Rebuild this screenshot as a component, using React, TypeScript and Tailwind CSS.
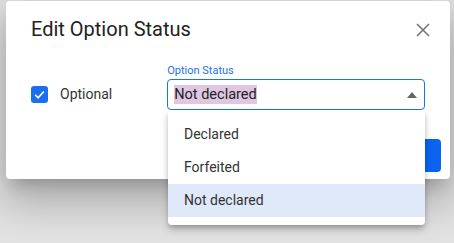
import React from 'react';

const font = { fontFamily: 'Roboto, "Liberation Sans", sans-serif' };

const App: React.FC = () => {
  const options = ['Declared', 'Forfeited', 'Not declared'];
  const selected = 'Not declared';

  return (
    <div className="h-[243px] w-[454px] overflow-hidden bg-[#e2e2e2] pt-[1px] pl-[6px]" style={font}>
      <div className="relative h-[178px] w-[444px] rounded-[4px] bg-white shadow-[0_11px_15px_-7px_rgba(0,0,0,0.2),0_24px_38px_3px_rgba(0,0,0,0.14),0_9px_46px_8px_rgba(0,0,0,0.12)]">
        <div className="flex items-center justify-between pt-[14px] pl-[25px] pr-[20px]">
          <h2 className="text-[20px] leading-[28px] text-[#222]">Edit Option Status</h2>
          <svg width="14" height="14" viewBox="0 0 14 14" className="mt-[2px]">
            <path d="M1 1 L13 13 M13 1 L1 13" stroke="#757575" strokeWidth="1.6" />
          </svg>
        </div>

        <div className="mt-[21px] flex items-start pl-[25px]">
          <div className="flex items-center pt-[20px]">
            <span className="flex h-[17px] w-[17px] items-center justify-center rounded-[3px] bg-[#1a6ff0]">
              <svg width="13" height="13" viewBox="0 0 24 24">
                <path d="M4 12.5 L9.5 18 L20 6.5" fill="none" stroke="white" strokeWidth="3" />
              </svg>
            </span>
            <span className="ml-[12px] text-[14px] text-[#333]">Optional</span>
          </div>

          <div className="ml-[55px] flex flex-col">
            <label className="text-[11px] leading-[14px] text-[#1a73e8]">Option Status</label>
            <div className="mt-[1px] flex h-[31px] w-[258px] items-center justify-between rounded-[4px] border border-[#1a73e8] pl-[6px] pr-[7px]">
              <span className="bg-[#e1c6e2] text-[14.5px] leading-[19px] text-[#222]">{selected}</span>
              <svg width="10" height="6" viewBox="0 0 10 6">
                <path d="M0 6 L5 0 L10 6 Z" fill="#666" />
              </svg>
            </div>
          </div>
        </div>

        <div className="mt-[29px] flex justify-end pr-[9px]">
          <button className="h-[33px] w-[80px] rounded-[4px] bg-[#0b63f2]" />
        </div>

        <div className="absolute left-[162px] top-[109px] w-[257px] rounded-b-[4px] bg-white py-[8px] shadow-[0_3px_5px_-1px_rgba(0,0,0,0.25),0_5px_8px_0_rgba(0,0,0,0.14)]">
          {options.map((o) => (
            <div
              key={o}
              className={`flex h-[33px] items-center pl-[16px] text-[14px] text-[#333] ${o === selected ? 'bg-[#dfe9f9]' : ''}`}
            >
              {o}
            </div>
          ))}
        </div>
      </div>
    </div>
  );
};

export default App;
